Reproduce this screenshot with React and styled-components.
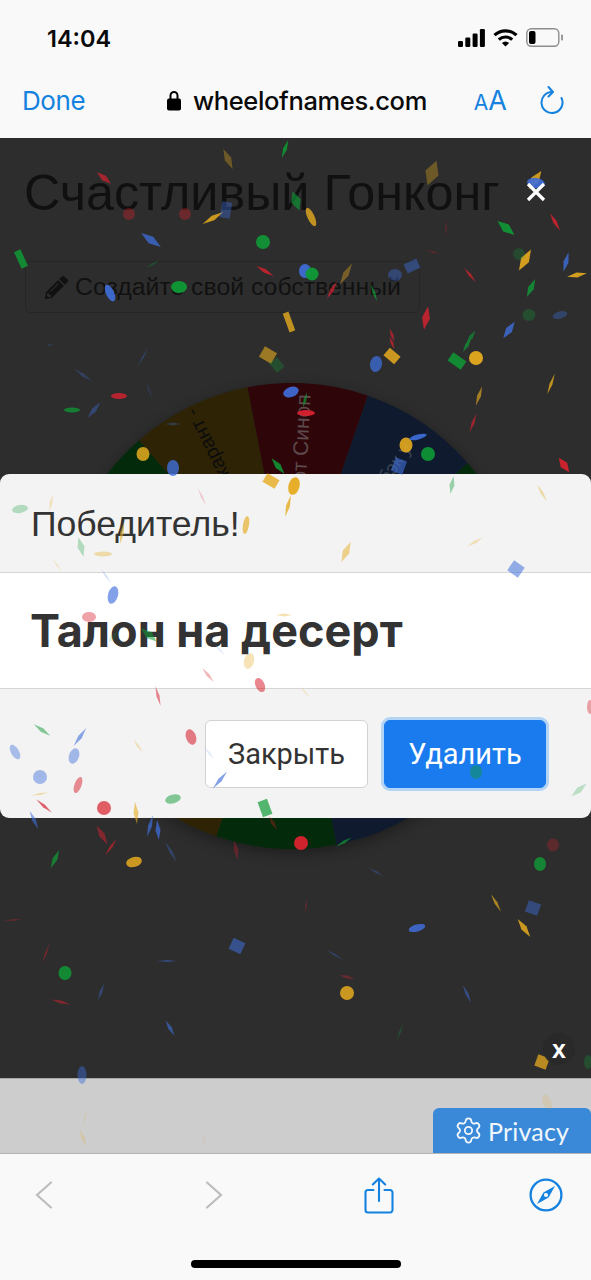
import styled, { createGlobalStyle } from "styled-components"
import { FaPencilAlt } from "react-icons/fa"
import { Settings } from "lucide-react"

const GlobalStyle = createGlobalStyle`
  html, body {
    margin: 0;
    padding: 0;
    background: #2d2d2d;
  }
  * { box-sizing: border-box; }
`

const Phone = styled.div`
  position: relative;
  width: 591px;
  height: 1280px;
  display: flex;
  flex-direction: column;
  overflow: hidden;
  font-family: "Liberation Sans", Arial, sans-serif;
`

/* safari chrome, top */
const TopChrome = styled.header`
  height: 138px;
  flex: none;
  background: #f9f9f9;
`
const StatusBar = styled.div`
  height: 75px;
  padding: 0 28px 0 47px;
  display: flex;
  align-items: center;
  justify-content: space-between;
`
const Clock = styled.span`
  font: 600 23.5px Inter, sans-serif;
  color: #0a0a0a;
  padding-top: 1px;
`
const StatusIcons = styled.div`
  display: flex;
  align-items: center;
  gap: 8px;
`
const UrlBar = styled.div`
  height: 50px;
  padding: 0 27px 0 22px;
  display: flex;
  align-items: center;
  justify-content: space-between;
`
const DoneLink = styled.span`
  font: 400 26px Inter, sans-serif;
  letter-spacing: -0.4px;
  color: #1582df;
  width: 64px;
`
const Address = styled.div`
  display: flex;
  align-items: center;
  gap: 12px;
  margin-left: 34px;
  font: 500 25.5px Inter, sans-serif;
  letter-spacing: -0.35px;
  color: #0a0a0a;
`
const UrlActions = styled.div`
  display: flex;
  align-items: center;
  gap: 33px;
`
const TextSize = styled.span`
  font-family: Inter, sans-serif;
  color: #1582df;
  font-size: 27px;
  line-height: 1;
  &::first-letter { font-size: 21px; }
`

/* page under the dialog backdrop */
const Page = styled.main`
  position: relative;
  flex: 1;
  background: #2d2d2d;
  padding: 25px 25px 0 24px;
`
const WheelTitle = styled.h1`
  margin: 0;
  font-weight: 400;
  font-size: 50.3px;
  line-height: 60px;
  color: #101010;
`
const CreateButton = styled.div`
  margin: 38px 0 0 1px;
  width: 395px;
  height: 52px;
  display: flex;
  align-items: center;
  gap: 7px;
  padding-left: 19px;
  font-size: 24.8px;
  color: #111;
  border: 1px solid #262626;
  border-radius: 5px;
`
const WheelHolder = styled.div`
  margin: 70px 0 0 35px;
  width: 466px;
  height: 466px;
  border-radius: 50%;
  box-shadow: 0 4px 14px rgba(0, 0, 0, 0.35);
`
const CloseMark = styled.button`
  position: absolute;
  z-index: 2;
  top: 44px;
  right: 45px;
  padding: 0;
  border: 0;
  background: none;
  display: flex;
`
const AdClose = styled.span`
  position: absolute;
  z-index: 2;
  right: 16px;
  bottom: 13px;
  width: 32px;
  height: 32px;
  border-radius: 50%;
  background: #292929;
  color: #fff;
  font: 700 25px/32px "Liberation Sans", sans-serif;
  text-align: center;
`

const AdStrip = styled.div`
  height: 76px;
  flex: none;
  background: #cdcdcd;
  border-top: 1px solid #a9a9a9;
  border-bottom: 1px solid #b5b5b5;
  display: flex;
  justify-content: flex-end;
  align-items: flex-end;
`
const PrivacyTab = styled.div`
  width: 158px;
  height: 45px;
  background: #3a89d9;
  border-radius: 6px 6px 0 0;
  display: flex;
  align-items: center;
  gap: 5px;
  padding-left: 21px;
  color: #f2f7fc;
  font: 400 25px Lato, sans-serif;
  letter-spacing: 0.2px;
`

/* safari chrome, bottom */
const BottomChrome = styled.footer`
  height: 126px;
  flex: none;
  background: #f9f9f9;
`
const ToolBar = styled.div`
  height: 82px;
  padding-left: 35px;
  display: grid;
  grid-template-columns: 170px 159px 165px auto;
  align-items: center;
  justify-items: start;
`
const HomeIndicator = styled.div`
  margin: 24px auto 0;
  width: 210px;
  height: 8px;
  border-radius: 4px;
  background: #000;
`

/* winner dialog */
const Dialog = styled.section`
  position: absolute;
  left: 0;
  right: 0;
  top: 474px;
  height: 344px;
  display: flex;
  flex-direction: column;
  border-radius: 9px;
  overflow: hidden;
  background: #f3f3f3;
  color: #333;
`
const DialogHeader = styled.div`
  height: 99px;
  flex: none;
  padding: 29px 31px 0;
  border-bottom: 1px solid #d6d6d6;
  font-size: 35.6px;
  line-height: 42px;
`
const DialogBody = styled.div`
  height: 116px;
  flex: none;
  padding: 29px 30px 0;
  background: #fff;
  border-bottom: 1px solid #d6d6d6;
  font: 700 45px/58px Inter, sans-serif;
`
const DialogFooter = styled.div`
  flex: 1;
  padding: 31px 45px 0 0;
  display: flex;
  justify-content: flex-end;
  gap: 16px;
`
const DialogButton = styled.button`
  width: ${p => (p.$primary ? 162 : 163)}px;
  height: 68px;
  font: 400 29px Roboto, sans-serif;
  border-radius: 6px;
  color: ${p => (p.$primary ? "#fff" : "#333")};
  background: ${p => (p.$primary ? "#197bed" : "#fff")};
  border: ${p => (p.$primary ? "1px solid #197bed" : "1px solid #d2d2d2")};
  box-shadow: ${p => (p.$primary ? "0 0 0 3px #b4d4f6" : "none")};
`

const ConfettiLayer = styled.svg`
  position: absolute;
  inset: 0;
  pointer-events: none;
  filter: blur(0.4px);
`

const COLORS = { g: "#0f9a36", y: "#e6ab1e", b: "#3f6fdb", r: "#d9222f" }

// shape, x, y, length, width, rotation, colour, opacity
// o = ellipse, s = rectangle, d = rhomb
const PIECES = [
  ["d", 285, 149, 19, 4, -70, "g", 0.85], ["d", 228, 159, 22, 7, 65, "y", 0.35], ["d", 104, 178, 18, 6, 40, "r", 0.7],
  ["d", 432, 173, 26, 14, -70, "y", 0.35], ["d", 535, 180, 22, 9, -55, "y", 0.85], ["o", 536, 183, 18, 10, 10, "b", 0.9],
  ["o", 129, 214, 12, 12, 0, "r", 0.35], ["o", 185, 214, 12, 12, 0, "r", 0.35], ["d", 213, 218, 24, 5, -30, "y", 0.85],
  ["s", 226, 210, 10, 16, 10, "b", 0.4], ["d", 296, 201, 20, 10, 70, "g", 0.65], ["o", 311, 217, 20, 7, 65, "y", 0.8],
  ["d", 446, 228, 16, 2, 90, "r", 0.25], ["d", 506, 228, 22, 9, 40, "g", 0.9], ["d", 555, 222, 20, 4, 60, "r", 0.8],
  ["d", 151, 240, 24, 8, 35, "b", 0.75], ["o", 263, 242, 14, 14, 0, "g", 0.9], ["s", 21, 259, 18, 7, 65, "g", 0.85],
  ["d", 153, 264, 16, 2, -30, "g", 0.35], ["d", 265, 271, 20, 4, 30, "r", 0.8], ["o", 305, 271, 12, 14, 0, "b", 0.9],
  ["o", 312, 274, 13, 13, 0, "g", 0.95], ["d", 346, 274, 24, 6, -60, "y", 0.4], ["s", 412, 266, 14, 10, -25, "b", 0.45],
  ["o", 395, 275, 14, 12, 0, "b", 0.4], ["d", 433, 252, 14, 2, 15, "r", 0.25], ["d", 525, 260, 24, 9, -60, "y", 0.9],
  ["o", 519, 254, 12, 12, 0, "g", 0.25], ["d", 566, 262, 20, 5, -75, "b", 0.8], ["d", 577, 275, 20, 5, -10, "y", 0.9],
  ["d", 470, 275, 18, 3, 50, "r", 0.7], ["d", 531, 288, 20, 6, -65, "g", 0.8], ["o", 110, 293, 18, 8, 65, "b", 0.9],
  ["o", 179, 287, 16, 12, 0, "g", 0.95], ["d", 332, 290, 20, 4, -60, "r", 0.7], ["d", 374, 293, 18, 3, 70, "g", 0.7],
  ["s", 289, 322, 20, 6, 70, "y", 0.8], ["d", 426, 318, 24, 8, -80, "r", 0.8], ["o", 529, 315, 13, 12, 0, "g", 0.3],
  ["o", 560, 315, 15, 7, -15, "b", 0.35], ["d", 509, 330, 20, 7, -55, "b", 0.8], ["d", 392, 335, 14, 3, 70, "r", 0.7],
  ["d", 471, 337, 16, 4, -55, "g", 0.6], ["d", 50, 345, 8, 2, 0, "b", 0.2],
  ["s", 268, 355, 14, 12, 30, "y", 0.6], ["s", 277, 365, 12, 10, 50, "g", 0.3], ["s", 392, 356, 14, 10, 40, "y", 0.85],
  ["o", 376, 364, 12, 16, 10, "b", 0.75], ["s", 457, 361, 16, 10, 35, "g", 0.85], ["o", 476, 358, 14, 14, 0, "y", 0.95],
  ["d", 467, 345, 16, 4, -60, "g", 0.7], ["d", 392, 343, 14, 3, 70, "r", 0.7], ["d", 551, 384, 22, 3, -70, "y", 0.8],
  ["d", 479, 396, 20, 4, -72, "y", 0.65], ["d", 473, 423, 20, 3, -70, "r", 0.65], ["d", 564, 465, 18, 8, 55, "r", 0.9],
  ["o", 428, 454, 14, 14, 0, "g", 0.9], ["o", 406, 445, 13, 15, 0, "y", 0.9], ["o", 418, 437, 18, 5, -15, "b", 0.9],
  ["s", 399, 466, 12, 14, 20, "b", 0.6], ["o", 291, 392, 16, 10, -20, "b", 0.9], ["o", 306, 413, 18, 6, 0, "r", 0.95],
  ["d", 305, 400, 16, 3, -75, "g", 0.7], ["d", 278, 466, 20, 6, 50, "g", 0.85], ["o", 173, 468, 12, 16, 0, "b", 0.8],
  ["o", 143, 454, 13, 14, 0, "y", 0.85], ["o", 119, 396, 16, 6, 0, "r", 0.8], ["o", 72, 410, 16, 5, 0, "g", 0.75],
  ["d", 94, 410, 20, 5, -50, "b", 0.4], ["d", 83, 375, 22, 3, 35, "b", 0.3], ["d", 143, 357, 20, 2, -60, "b", 0.3],
  ["d", 149, 390, 18, 2, 70, "b", 0.2], ["d", 173, 424, 16, 3, 0, "b", 0.3],
  // over the dialog, paler
  ["d", 452, 485, 18, 5, -80, "g", 0.4], ["d", 542, 493, 20, 3, 60, "y", 0.35], ["s", 271, 481, 14, 10, 30, "y", 0.8],
  ["o", 294, 486, 11, 18, 15, "y", 0.95], ["d", 288, 506, 22, 4, -75, "y", 0.8], ["d", 202, 497, 20, 2, 65, "r", 0.2],
  ["o", 20, 509, 16, 8, -10, "g", 0.28], ["d", 51, 503, 18, 3, -80, "y", 0.25], ["o", 246, 525, 6, 18, 10, "y", 0.65],
  ["d", 122, 533, 22, 4, -80, "y", 0.55], ["d", 81, 547, 20, 7, 75, "g", 0.28], ["o", 103, 554, 18, 5, 0, "y", 0.35],
  ["d", 346, 552, 22, 7, -65, "y", 0.5], ["d", 475, 542, 18, 3, -30, "y", 0.3], ["s", 516, 569, 13, 12, 35, "b", 0.55],
  ["d", 57, 565, 18, 2, 55, "y", 0.18], ["d", 106, 576, 18, 2, 55, "b", 0.22], ["o", 113, 595, 10, 18, 15, "b", 0.65],
  ["o", 89, 617, 14, 10, 0, "r", 0.42], ["d", 284, 615, 16, 3, 0, "y", 0.35], ["d", 149, 635, 20, 8, 40, "g", 0.55],
  ["d", 113, 637, 14, 6, -50, "g", 0.15], ["d", 220, 650, 16, 2, 45, "b", 0.14], ["o", 249, 661, 10, 16, 15, "y", 0.33],
  ["d", 208, 675, 18, 3, 50, "r", 0.35], ["o", 260, 685, 9, 15, -25, "r", 0.55], ["d", 305, 692, 16, 2, 50, "y", 0.18],
  ["d", 158, 696, 20, 3, 75, "r", 0.55], ["d", 42, 730, 20, 4, 35, "g", 0.5], ["d", 80, 737, 22, 4, -55, "b", 0.6],
  ["o", 191, 737, 10, 16, -20, "r", 0.58], ["o", 15, 752, 8, 16, -30, "b", 0.42], ["o", 74, 756, 10, 16, 20, "b", 0.45],
  ["d", 138, 746, 16, 2, 55, "y", 0.35], ["o", 40, 777, 14, 14, 0, "b", 0.45], ["o", 78, 785, 7, 17, 20, "r", 0.5],
  ["d", 209, 753, 16, 2, 50, "b", 0.15], ["d", 220, 780, 22, 4, -50, "b", 0.65], ["d", 40, 794, 18, 2, -10, "y", 0.35],
  ["d", 44, 806, 20, 3, 40, "r", 0.7], ["o", 104, 808, 14, 14, 0, "r", 0.72], ["d", 136, 813, 22, 5, 85, "y", 0.6],
  ["o", 173, 799, 16, 9, -15, "g", 0.5], ["s", 265, 808, 16, 10, 70, "g", 0.7], ["o", 476, 772, 12, 14, 0, "g", 0.45],
  ["d", 579, 790, 20, 6, -40, "g", 0.25], ["o", 590, 707, 6, 14, 0, "r", 0.4],
  // below the dialog
  ["d", 34, 820, 20, 4, 65, "b", 0.6], ["d", 150, 826, 22, 4, -75, "b", 0.7], ["d", 158, 830, 20, 5, 85, "b", 0.75],
  ["d", 102, 835, 22, 6, 60, "r", 0.5], ["d", 111, 847, 20, 3, -55, "r", 0.6], ["d", 55, 859, 20, 5, -65, "g", 0.75],
  ["o", 134, 862, 16, 10, -15, "y", 0.85], ["d", 171, 852, 24, 3, 60, "b", 0.35], ["d", 236, 850, 20, 5, 80, "r", 0.3],
  ["d", 273, 823, 16, 4, 60, "r", 0.3], ["o", 301, 843, 14, 14, 0, "r", 0.95], ["d", 344, 842, 18, 3, -30, "g", 0.7],
  ["d", 376, 872, 18, 2, 30, "b", 0.35], ["o", 553, 845, 12, 13, 0, "r", 0.28], ["o", 540, 864, 12, 14, 0, "g", 0.8],
  ["d", 496, 903, 20, 3, 60, "y", 0.7], ["s", 533, 908, 13, 12, 20, "b", 0.45], ["d", 524, 928, 22, 6, 55, "y", 0.85],
  ["o", 417, 928, 17, 7, -15, "b", 0.85], ["s", 237, 946, 13, 12, 25, "b", 0.55], ["d", 335, 955, 20, 2, 30, "b", 0.35],
  ["d", 46, 953, 22, 2, -70, "r", 0.4], ["d", 13, 920, 18, 2, -5, "r", 0.3], ["d", 306, 906, 14, 2, -80, "r", 0.25],
  ["d", 167, 961, 20, 2, 0, "b", 0.45], ["o", 65, 973, 13, 14, 0, "g", 0.85], ["o", 347, 993, 14, 14, 0, "y", 0.85],
  ["d", 347, 977, 16, 3, 15, "r", 0.35], ["d", 101, 992, 18, 3, -70, "b", 0.4], ["d", 61, 1002, 20, 3, 15, "r", 0.5],
  ["d", 467, 994, 20, 3, 65, "b", 0.5], ["d", 170, 1028, 18, 4, 60, "b", 0.6], ["d", 400, 1032, 18, 2, -70, "g", 0.3],
  ["s", 542, 1062, 12, 12, 20, "y", 0.75], ["o", 588, 1062, 8, 14, 0, "g", 0.3], ["o", 82, 1075, 9, 18, 0, "b", 0.45],
  // over the ad strip
  ["o", 547, 1102, 8, 16, -25, "y", 0.15], ["d", 83, 1138, 18, 4, 70, "y", 0.2], ["d", 85, 1117, 20, 2, -75, "y", 0.1],
  ["d", 204, 1140, 18, 2, -80, "y", 0.08]
]

const Piece = ({ kind, x, y, len, wid, rot, color, opacity }) => {
  const fill = COLORS[color]
  const transform = `translate(${x} ${y}) rotate(${rot})`
  if (kind === "o") return <ellipse transform={transform} rx={len / 2} ry={wid / 2} fill={fill} opacity={opacity} />
  if (kind === "s") return <rect transform={transform} x={-len / 2} y={-wid / 2} width={len} height={wid} fill={fill} opacity={opacity} />
  return <polygon transform={transform} points={`${-len / 2},0 0,${-wid / 2} ${len / 2},0 0,${wid / 2}`} fill={fill} opacity={opacity} />
}

const Confetti = () => (
  <ConfettiLayer width="591" height="1280" viewBox="0 0 591 1280">
    {PIECES.map(([kind, x, y, len, wid, rot, color, opacity], i) => (
      <Piece key={i} kind={kind} x={x} y={y} len={len} wid={wid} rot={rot} color={color} opacity={opacity} />
    ))}
  </ConfettiLayer>
)

const SECTOR_COLORS = ["#032a0a", "#2e2405", "#2e0509", "#0f1a2e"]
const WHEEL_R = 233

const sectorPath = (from, to) => {
  const point = deg => {
    const a = (deg * Math.PI) / 180
    return `${WHEEL_R + WHEEL_R * Math.sin(a)} ${WHEEL_R - WHEEL_R * Math.cos(a)}`
  }
  return `M${WHEEL_R} ${WHEEL_R} L${point(from)} A${WHEEL_R} ${WHEEL_R} 0 0 1 ${point(to)} Z`
}

const Wheel = () => (
  <svg width="466" height="466" viewBox="0 0 466 466" style={{ display: "block" }}>
    {Array.from({ length: 12 }, (_, i) => {
      const from = -71 + i * 30
      return <path key={i} d={sectorPath(from, from + 30)} fill={SECTOR_COLORS[i % 4]} />
    })}
    <g transform={`translate(${WHEEL_R} ${WHEEL_R}) rotate(-116)`}>
      <text x="230" y="6" textAnchor="end" fontSize="20" fontFamily="Liberation Sans" fill="#0c0c0c">карант -</text>
    </g>
    <g transform={`translate(${WHEEL_R} ${WHEEL_R}) rotate(-87)`}>
      <text x="222" y="7" textAnchor="end" fontSize="21" fontFamily="Liberation Sans" fill="#5c4a4c">Купон от Синоп</text>
    </g>
    <g transform={`translate(${WHEEL_R} ${WHEEL_R}) rotate(-56)`}>
      <text x="206" y="6" textAnchor="end" fontSize="19" fontFamily="Liberation Sans" fill="#3c4454">Кэшбэк у</text>
    </g>
  </svg>
)

const SignalIcon = () => (
  <svg width="27" height="18" viewBox="0 0 27 18" fill="#000">
    <rect x="0" y="12" width="5" height="6" rx="1.2" />
    <rect x="7.3" y="8.5" width="5" height="9.5" rx="1.2" />
    <rect x="14.6" y="4.5" width="5" height="13.5" rx="1.2" />
    <rect x="21.9" y="0" width="5" height="18" rx="1.2" />
  </svg>
)

const WifiIcon = () => (
  <svg width="25" height="18" viewBox="0 0 25 18" fill="none" stroke="#000" strokeWidth="3.2">
    <path d="M1.5 6.2 A16 16 0 0 1 23.5 6.2" />
    <path d="M5.8 10.6 A10 10 0 0 1 19.2 10.6" />
    <path d="M8.9 14 L12.5 17.6 L16.1 14 A5 5 0 0 0 8.9 14 Z" fill="#000" stroke="none" />
  </svg>
)

const BatteryIcon = () => (
  <svg width="37" height="19" viewBox="0 0 37 19">
    <rect x="0.8" y="0.8" width="32" height="17.4" rx="4.5" fill="none" stroke="#8e8e8e" strokeWidth="1.4" />
    <rect x="3" y="3" width="6.5" height="13" rx="2" fill="#000" />
    <path d="M35 6.5 A3 3 0 0 1 35 12.5 Z" fill="#9a9a9a" />
  </svg>
)

const LockIcon = () => (
  <svg width="14" height="21" viewBox="0 0 14 21">
    <path d="M3.5 9V5.5a3.5 3.5 0 0 1 7 0V9" fill="none" stroke="#000" strokeWidth="2" />
    <rect x="0" y="8.5" width="14" height="12" rx="2" fill="#000" />
  </svg>
)

const ReloadIcon = () => (
  <svg width="24" height="29" viewBox="0 0 24 29" fill="none" stroke="#1582df" strokeWidth="2" strokeLinecap="round" strokeLinejoin="round">
    <path d="M12 6 A10.5 10.5 0 1 0 21.5 12" />
    <path d="M8.5 1 L13 6 L8.5 10.5" />
  </svg>
)

const CloseIcon = () => (
  <svg width="20" height="20" viewBox="0 0 20 20" stroke="#fff" strokeWidth="3.2">
    <path d="M2 2 L18 18 M18 2 L2 18" />
  </svg>
)

const Chevron = ({ flip }) => (
  <svg width="18" height="28" viewBox="0 0 18 28" fill="none" stroke="#bdbdbd" strokeWidth="2.2" strokeLinecap="round">
    <path d={flip ? "M2 1.5 L16 14 L2 26.5" : "M16 1.5 L2 14 L16 26.5"} />
  </svg>
)

const ShareIcon = () => (
  <svg width="30" height="37" viewBox="0 0 30 37" fill="none" stroke="#1582df" strokeWidth="2.1" strokeLinecap="round" strokeLinejoin="round">
    <path d="M9.5 13 H4 a2.5 2.5 0 0 0 -2.5 2.5 V33 a2.5 2.5 0 0 0 2.5 2.5 H26 a2.5 2.5 0 0 0 2.5 -2.5 V15.5 a2.5 2.5 0 0 0 -2.5 -2.5 H20.5" />
    <path d="M15 1.5 V24 M8.8 7.5 L15 1.5 L21.2 7.5" />
  </svg>
)

const CompassIcon = () => (
  <svg width="34" height="34" viewBox="0 0 34 34">
    <circle cx="17" cy="17" r="15.4" fill="none" stroke="#1582df" strokeWidth="2.3" />
    <path d="M26 8 L19.6 19.6 L14.4 14.4 Z" fill="#1582df" />
    <path d="M8 26 L14.4 14.4 L19.6 19.6 Z" fill="#1582df" />
    <circle cx="17" cy="17" r="2" fill="#f9f9f9" />
  </svg>
)

export default function App() {
  return (
    <Phone>
      <GlobalStyle />

      <TopChrome>
        <StatusBar>
          <Clock>14:04</Clock>
          <StatusIcons>
            <SignalIcon />
            <WifiIcon />
            <BatteryIcon />
          </StatusIcons>
        </StatusBar>
        <UrlBar>
          <DoneLink>Done</DoneLink>
          <Address>
            <LockIcon />
            wheelofnames.com
          </Address>
          <UrlActions>
            <TextSize>AA</TextSize>
            <ReloadIcon />
          </UrlActions>
        </UrlBar>
      </TopChrome>

      <Page>
        <WheelTitle>Счастливый Гонконг</WheelTitle>
        <CreateButton>
          <FaPencilAlt size={23} color="#111" />
          Создайте свой собственный
        </CreateButton>
        <WheelHolder>
          <Wheel />
        </WheelHolder>
        <CloseMark>
          <CloseIcon />
        </CloseMark>
        <AdClose>x</AdClose>
      </Page>

      <AdStrip>
        <PrivacyTab>
          <Settings size={29} strokeWidth={1.5} />
          Privacy
        </PrivacyTab>
      </AdStrip>

      <BottomChrome>
        <ToolBar>
          <Chevron />
          <Chevron flip />
          <ShareIcon />
          <CompassIcon />
        </ToolBar>
        <HomeIndicator />
      </BottomChrome>

      <Dialog>
        <DialogHeader>Победитель!</DialogHeader>
        <DialogBody>Талон на десерт</DialogBody>
        <DialogFooter>
          <DialogButton>Закрыть</DialogButton>
          <DialogButton $primary>Удалить</DialogButton>
        </DialogFooter>
      </Dialog>

      <Confetti />
    </Phone>
  )
}
